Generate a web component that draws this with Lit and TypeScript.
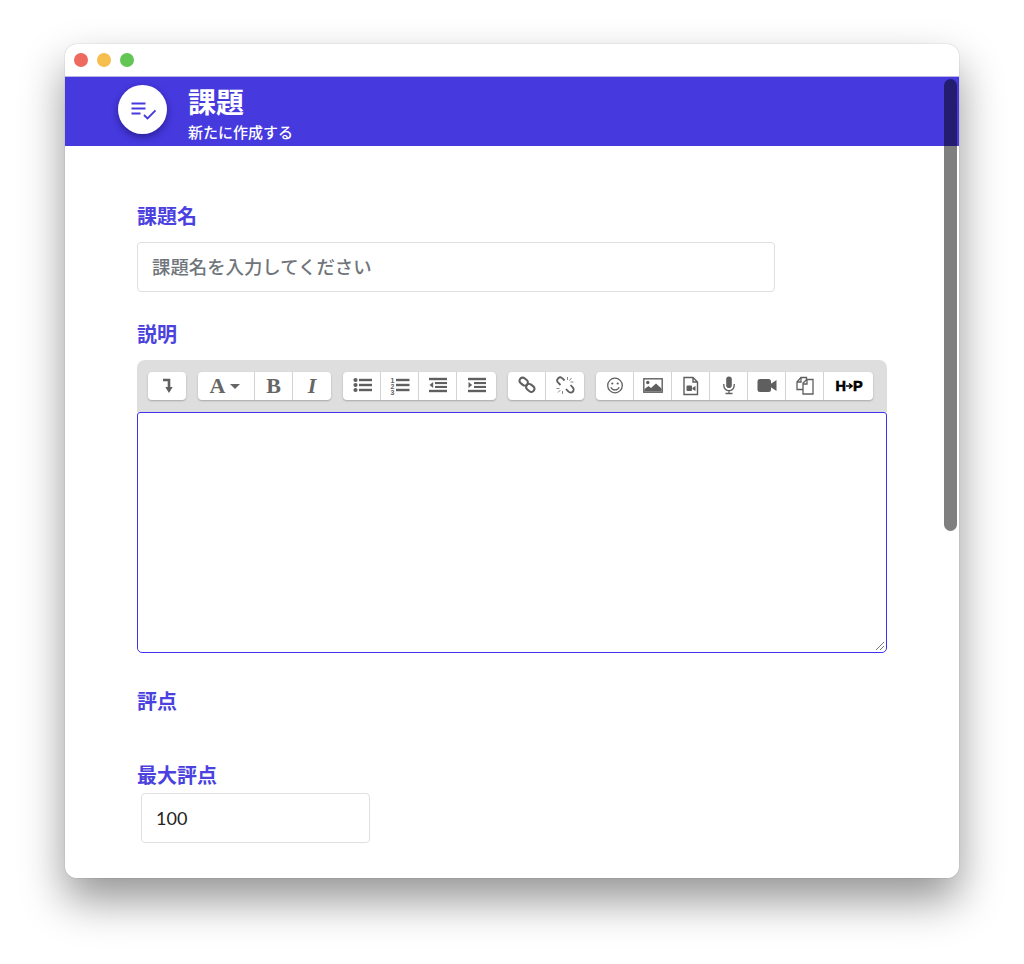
import { LitElement, html, css, svg } from "lit";
import { customElement } from "lit/decorators.js";

const G = "#5f5f5f";
const icons: Record<string, any> = {
  enter: svg`<path d="M6 4h6v8" fill="none" stroke="${G}" stroke-width="2.6"/><path d="M8.300 11h7.400L12 17z" fill="${G}"/>`,
  ul: svg`<g fill="${G}"><circle cx="3.500" cy="4" r="2.100"/><circle cx="3.500" cy="9" r="2.100"/><circle cx="3.500" cy="14" r="2.100"/><rect x="7" y="2.800" width="13" height="2.400"/><rect x="7" y="7.800" width="13" height="2.400"/><rect x="7" y="12.800" width="13" height="2.400"/></g>`,
  ol: svg`<g fill="${G}" style="opacity:.99"><text x="0.500" y="6.500" font-size="7" font-weight="700" font-family="Liberation Sans">1</text><text x="0.500" y="12.500" font-size="7" font-weight="700" font-family="Liberation Sans">2</text><text x="0.500" y="18.500" font-size="7" font-weight="700" font-family="Liberation Sans">3</text><rect x="6" y="2.800" width="13.500" height="2.400"/><rect x="6" y="7.800" width="13.500" height="2.400"/><rect x="6" y="12.800" width="13.500" height="2.400"/></g>`,
  outdent: svg`<g fill="${G}"><rect x="1" y="1.800" width="18" height="2.400"/><rect x="7" y="6" width="12" height="2.100"/><rect x="7" y="9.900" width="12" height="2.100"/><rect x="1" y="13.800" width="18" height="2.400"/><path d="M5.200 6v6L1.500 9z"/></g>`,
  indent: svg`<g fill="${G}"><rect x="1" y="1.800" width="18" height="2.400"/><rect x="7" y="6" width="12" height="2.100"/><rect x="7" y="9.900" width="12" height="2.100"/><rect x="1" y="13.800" width="18" height="2.400"/><path d="M1.500 6v6L5.200 9z"/></g>`,
  link: svg`<g fill="none" stroke="${G}" stroke-width="2.100"><rect x="2.200" y="2.500" width="9" height="6.200" rx="3.100" transform="rotate(38 6.700 5.600)"/><rect x="8.800" y="8.800" width="9" height="6.200" rx="3.100" transform="rotate(38 13.300 11.900)"/></g>`,
  unlink: svg`<g fill="none" stroke="${G}" stroke-width="1.800"><path d="M9.500 4.500L7.500 2.500a3 3 0 0 0-4.500 4l2.500 2.500"/><path d="M11 13l2.500 2.700a3 3 0 0 0 4.300-4.200L15.500 9"/></g><g stroke="#8a8a8a" stroke-width="1"><path d="M12.500 1v3M16.500 2l-2 2.500M18.500 6h-3M1.500 12.500h3M3 16.500l2.500-2.500M7.500 18v-3"/></g>`,
  smile: svg`<circle cx="10" cy="9.500" r="7.300" fill="none" stroke="${G}" stroke-width="1.300"/><circle cx="7.300" cy="7.500" r="1.100" fill="${G}"/><circle cx="12.700" cy="7.500" r="1.100" fill="${G}"/><path d="M5.800 11.200a4.600 4.600 0 0 0 8.400 0" fill="none" stroke="${G}" stroke-width="1.200"/>`,
  image: svg`<rect x="0.800" y="2.800" width="18.400" height="13.400" fill="none" stroke="${G}" stroke-width="1.400"/><circle cx="4.800" cy="6.500" r="1.700" fill="${G}"/><path d="M1.500 15.500v-2.500l4-3 2.500 2 5-4.500 5.500 5v3z" fill="${G}"/>`,
  file: svg`<path d="M3 1.500h9l4.500 4.500v12.500H3z M12 1.500V6h4.500" fill="none" stroke="${G}" stroke-width="1.400"/><rect x="5.500" y="9.500" width="5.500" height="5.500" rx="1" fill="${G}"/><path d="M11.500 11.800l3-1.800v5l-3-1.800z" fill="${G}"/>`,
  mic: svg`<rect x="7.200" y="0.500" width="5.600" height="11.500" rx="2.800" fill="${G}"/><path d="M4.800 8v1.500a5.200 5.200 0 0 0 10.400 0V8M10 15v2.500M6.500 17.500h7" fill="none" stroke="${G}" stroke-width="1.300"/>`,
  video: svg`<rect x="0.500" y="3" width="13.500" height="13" rx="2.500" fill="${G}"/><path d="M13.500 8l6-4v11l-6-4z" fill="${G}"/>`,
  copy: svg`<g fill="#fff" stroke="${G}" stroke-width="1.300"><path d="M2 6l4-4.500h5.500v12H2z"/><path d="M8 7l4-3.500h6V18H8z"/><path d="M6 1.500V6H2M12 3.500V8H8" fill="none"/></g>`,
};

@customElement("app-root")
export class AppRoot extends LitElement {
  static styles = css`
    :host { display: block; width: 1024px; height: 964px; background: #fff; overflow: hidden; font-family: "Noto Sans CJK JP", sans-serif; }
    .page { padding: 44px 65px 0; }
    .shadow { border-radius: 12px; box-shadow: 0 0 1px rgba(0,0,0,.45), 0 22px 44px rgba(0,0,0,.42); }
    .win { position: relative; height: 834px; border-radius: 12px; background: #fff; overflow: hidden; }
    .title { box-sizing: border-box; height: 33px; display: flex; align-items: center; gap: 9px; padding: 0 0 1px 9px; border-bottom: 1px solid #b9b5e8; }
    .dot { width: 14px; height: 14px; border-radius: 50%; }
    .red { background: #ee6a5f; }
    .yellow { background: #f5be4f; }
    .green { background: #62c554; }
    .head { height: 69px; background: #4639de; display: flex; padding-left: 53px; overflow: hidden; }
    .round { width: 49px; height: 49px; margin-top: 8px; border-radius: 50%; background: #fff; box-shadow: 0 3px 7px rgba(20,10,90,.55); display: flex; align-items: center; justify-content: center; flex: none; }
    .htext { margin-left: 21px; color: #fff; }
    .h1 { font-size: 28px; line-height: 30px; margin-top: 9px; font-weight: 700; }
    .h2 { font-size: 15px; line-height: 18px; margin-top: 7px; font-weight: 500; }
    .body { padding: 58px 0 0 72px; }
    .label { color: #4a41de; font-size: 20px; line-height: 24px; padding-bottom: 2px; font-weight: 700; }
    .input { box-sizing: border-box; width: 638px; height: 50px; margin-top: 12px; border: 1px solid #dfdfdf; border-radius: 4px; padding: 0 14px 3px; display: flex; align-items: center; font-size: 18.4px; font-weight: 500; color: #6f757b; }
    .l2 { margin-top: 30px; }
    .editor { width: 750px; margin-top: 12px; }
    .bar { height: 52px; box-sizing: border-box; background: #dedede; border-radius: 8px 8px 0 0; padding: 12px 0 0 11px; display: flex; gap: 12px; }
    .group { height: 28px; display: flex; background: #fff; border-radius: 4px; box-shadow: 0 1px 2px rgba(0,0,0,.25); }
    .btn { width: 38px; height: 28px; box-sizing: border-box; display: flex; align-items: center; justify-content: center; border-right: 1px solid #d3d3d3; color: #666; }
    .btn:last-child { border-right: 0; }
    .group:nth-child(3) .btn:last-child { width: 39px; }
    .wide { width: 57px; gap: 5px; padding-right: 2px; }
    .hp { width: 49px; padding-left: 1px; color: #000; font: 700 14.500px/1 "Liberation Sans", sans-serif; -webkit-text-stroke: 0.6px #000; }
    .serif { font-family: "Liberation Serif", serif; font-size: 22px; font-weight: 700; line-height: 1; }
    .it { font-style: italic; font-weight: 700; }
    .caret { width: 0; height: 0; border: 5.500px solid transparent; border-top: 5.500px solid #666; border-bottom: 0; }
    .area { position: relative; box-sizing: border-box; height: 241px; border: 1px solid #4033ee; border-radius: 3px 3px 5px 5px; }
    .grip { position: absolute; right: 1px; bottom: 1px; }
    .l3 { margin-top: 36px; }
    .l4 { margin-top: 48px; }
    .num { box-sizing: border-box; width: 229px; height: 50px; margin: 4px 0 0 4px; border: 1px solid #dfdfdf; border-radius: 4px; padding: 0 14px; display: flex; align-items: center; font-family: Lato, sans-serif; font-size: 18px; color: #222; }
    .scroll { position: absolute; right: 2px; top: 35px; width: 13px; height: 452px; border-radius: 7px; background: rgba(0,0,0,.5); }
  `;

  private icon(n: string) {
    return html`<svg width="20" height="20" viewBox="0 0 20 20">${icons[n]}</svg>`;
  }

  render() {
    const b = (n: string) => html`<div class="btn">${this.icon(n)}</div>`;
    return html`
      <div class="page">
        <div class="shadow">
          <div class="win">
            <div class="title">
              <div class="dot red"></div>
              <div class="dot yellow"></div>
              <div class="dot green"></div>
            </div>
            <div class="head">
              <div class="round">
                <svg width="26" height="26" viewBox="0 0 26 26">
                  <g fill="none" stroke="#4639de" stroke-width="1.800"><path d="M1.500 6.500h14M1.500 11.500h14M1.500 16.500h9"/><path d="M14 18l3.500 3.500 8-8" /></g>
                </svg>
              </div>
              <div class="htext">
                <div class="h1">課題</div>
                <div class="h2">新たに作成する</div>
              </div>
            </div>
            <div class="body">
              <div class="label">課題名</div>
              <div class="input">課題名を入力してください</div>
              <div class="label l2">説明</div>
              <div class="editor">
                <div class="bar">
                  <div class="group">${b("enter")}</div>
                  <div class="group">
                    <div class="btn wide"><span class="serif">A</span><span class="caret"></span></div>
                    <div class="btn"><span class="serif">B</span></div>
                    <div class="btn"><span class="serif it">I</span></div>
                  </div>
                  <div class="group">${b("ul")}${b("ol")}${b("outdent")}${b("indent")}</div>
                  <div class="group">${b("link")}${b("unlink")}</div>
                  <div class="group">
                    ${b("smile")}${b("image")}${b("file")}${b("mic")}${b("video")}${b("copy")}
                    <div class="btn hp"><span>H</span><svg width="7" height="10" viewBox="0 0 7 10"><path d="M0 5h5M3 2.500L6 5 3 7.500" fill="none" stroke="#000" stroke-width="1.500"/></svg><span>P</span></div>
                  </div>
                </div>
                <div class="area">
                  <svg class="grip" width="10" height="10" viewBox="0 0 10 10"><path d="M1 9l8-8M5 9l4-4" stroke="#777" stroke-width="1"/></svg>
                </div>
              </div>
              <div class="label l3">評点</div>
              <div class="label l4">最大評点</div>
              <div class="num">100</div>
            </div>
            <div class="scroll"></div>
          </div>
        </div>
      </div>
    `;
  }
}
